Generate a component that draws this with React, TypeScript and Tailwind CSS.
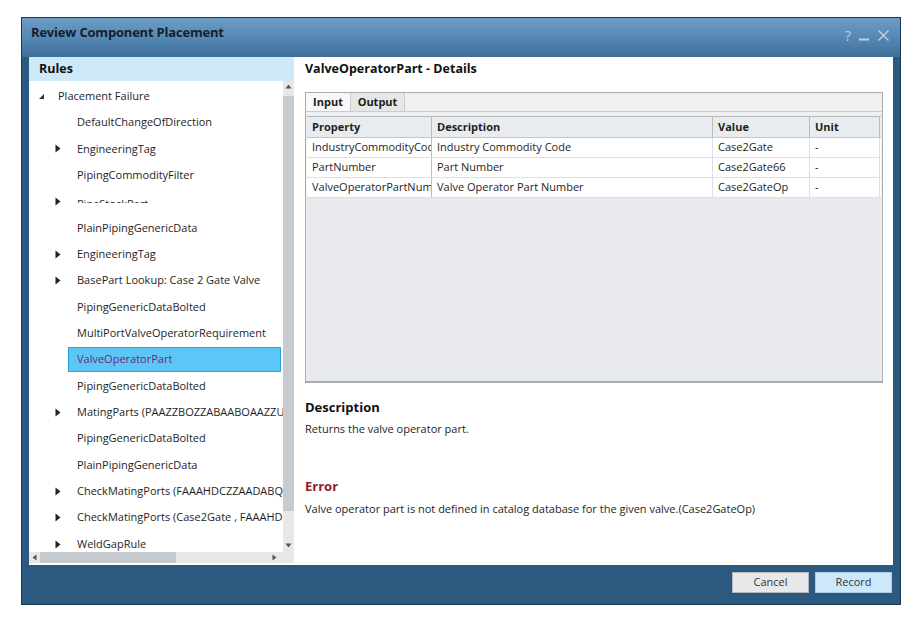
import React from "react";

type Node = { label: string; level: 0 | 1; arrow?: "open" | "closed"; selected?: boolean; clipped?: boolean };

const tree: Node[] = [
  { label: "Placement Failure", level: 0, arrow: "open" },
  { label: "DefaultChangeOfDirection", level: 1 },
  { label: "EngineeringTag", level: 1, arrow: "closed" },
  { label: "PipingCommodityFilter", level: 1 },
  { label: "PipeStockPart", level: 1, arrow: "closed", clipped: true },
  { label: "PlainPipingGenericData", level: 1 },
  { label: "EngineeringTag", level: 1, arrow: "closed" },
  { label: "BasePart Lookup: Case 2 Gate Valve", level: 1, arrow: "closed" },
  { label: "PipingGenericDataBolted", level: 1 },
  { label: "MultiPortValveOperatorRequirement", level: 1 },
  { label: "ValveOperatorPart", level: 1, selected: true },
  { label: "PipingGenericDataBolted", level: 1 },
  { label: "MatingParts (PAAZZBOZZABAABOAAZZUSAAAA)", level: 1, arrow: "closed" },
  { label: "PipingGenericDataBolted", level: 1 },
  { label: "PlainPipingGenericData", level: 1 },
  { label: "CheckMatingPorts (FAAAHDCZZAADABQZZAA)", level: 1, arrow: "closed" },
  { label: "CheckMatingPorts (Case2Gate , FAAAHDCZZAA)", level: 1, arrow: "closed" },
  { label: "WeldGapRule", level: 1, arrow: "closed" },
];

const rows = [
  ["IndustryCommodityCode", "Industry Commodity Code", "Case2Gate", "-"],
  ["PartNumber", "Part Number", "Case2Gate66", "-"],
  ["ValveOperatorPartNumber", "Valve Operator Part Number", "Case2GateOp", "-"],
];

const font = { fontFamily: '"Open Sans", "Noto Sans", sans-serif' };

function Arrow({ kind }: { kind: "open" | "closed" }) {
  if (kind === "open") {
    return (
      <svg width="7" height="7" viewBox="0 0 7 7">
        <path d="M6 1 L6 6 L1 6 Z" fill="#333" />
      </svg>
    );
  }
  return (
    <svg width="6" height="9" viewBox="0 0 6 9">
      <path d="M0.5 0.5 L5.5 4.5 L0.5 8.5 Z" fill="#222" />
    </svg>
  );
}

function TreeRow({ node }: { node: Node }) {
  const indent = node.level === 0 ? "pl-[9px]" : "pl-[26px]";
  const gutter = node.level === 0 ? "w-[20px]" : "w-[22px]";
  return (
    <div className={`flex h-[26.35px] items-center ${indent}`}>
      <div className={`flex shrink-0 items-center ${gutter}`}>{node.arrow && <Arrow kind={node.arrow} />}</div>
      {node.selected ? (
        <div className="-ml-[9px] flex h-[25px] w-[213px] shrink-0 items-center border border-[#2f9fd8] bg-[#5cc6f6] pl-[8px] text-[#6a2a78]">
          {node.label}
        </div>
      ) : node.clipped ? (
        <span className="-mt-[5px] block h-[7px] overflow-hidden whitespace-nowrap leading-[15px]">{node.label}</span>
      ) : (
        <span className="whitespace-nowrap">{node.label}</span>
      )}
    </div>
  );
}

export default function App() {
  return (
    <div className="h-[624px] w-[924px] overflow-hidden bg-white pl-[21px] pt-[17px] text-[11px] text-[#1e1e1e]" style={font}>
      <div className="flex h-[588px] w-[880px] flex-col border border-[#1d3a55] bg-[#2c5980]">
        {/* title bar */}
        <div className="flex h-[39px] shrink-0 items-start justify-between bg-gradient-to-b from-[#6b9dc6] via-[#5688b4] to-[#3d6f9a] pl-[9px] pr-[10px] pt-[5px]">
          <span className="text-[13px] font-bold tracking-[-0.2px] text-[#14202c]">Review Component Placement</span>
          <div className="flex items-center gap-[7px] pt-[2px] text-[#b9d2e6]">
            <span className="text-[14px]">?</span>
            <svg width="12" height="12" viewBox="0 0 12 12">
              <path d="M1 9.5 H11" stroke="#b9d2e6" strokeWidth="2" />
            </svg>
            <svg width="13" height="13" viewBox="0 0 13 13">
              <path d="M1.5 1.5 L11.5 11.5 M11.5 1.5 L1.5 11.5" stroke="#b9d2e6" strokeWidth="1.4" />
            </svg>
          </div>
        </div>

        {/* body */}
        <div className="mx-[7px] flex h-[508px] shrink-0 bg-white">
          {/* rules panel */}
          <div className="flex w-[265px] shrink-0 flex-col">
            <div className="flex h-[24px] shrink-0 items-center bg-[#cde8f8] pl-[10px] text-[12.5px] font-bold text-[#111]">Rules</div>
            <div className="flex min-h-0 flex-1 flex-col">
              <div className="flex min-h-0 flex-1">
                <div className="min-w-0 flex-1 overflow-hidden pt-[2px] text-[11px]">
                  {tree.map((n, i) => (
                    <TreeRow key={i} node={n} />
                  ))}
                </div>
                {/* vertical scrollbar */}
                <div className="flex w-[11px] shrink-0 flex-col items-center bg-[#e8e8e8] pt-[3px]">
                  <svg width="7" height="5" viewBox="0 0 7 5">
                    <path d="M3.5 0.5 L6.5 4.5 L0.5 4.5 Z" fill="#555" />
                  </svg>
                  <div className="mt-[7px] h-[415px] w-[11px] bg-[#c6cbd0]" />
                  <div className="flex-1" />
                  <svg className="mb-[4px]" width="7" height="5" viewBox="0 0 7 5">
                    <path d="M0.5 0.5 L6.5 0.5 L3.5 4.5 Z" fill="#555" />
                  </svg>
                </div>
              </div>
              {/* horizontal scrollbar */}
              <div className="flex h-[11px] shrink-0">
                <div className="flex flex-1 items-center bg-[#e8e8e8] pl-[3px] pr-[6px]">
                  <svg width="5" height="7" viewBox="0 0 5 7">
                    <path d="M0.5 3.5 L4.5 0.5 L4.5 6.5 Z" fill="#555" />
                  </svg>
                  <div className="ml-[3px] h-[11px] w-[136px] bg-[#c6cbd0]" />
                  <div className="flex-1" />
                  <svg width="5" height="7" viewBox="0 0 5 7">
                    <path d="M0.5 0.5 L4.5 3.5 L0.5 6.5 Z" fill="#555" />
                  </svg>
                </div>
                <div className="w-[11px] bg-[#e8e8e8]" />
              </div>
              <div className="h-[2px] shrink-0" />
            </div>
          </div>

          {/* details panel */}
          <div className="flex min-w-0 flex-1 flex-col pl-[11px] pr-[10px]">
            <div className="flex h-[24px] shrink-0 items-center text-[12.5px] font-bold text-[#111]">ValveOperatorPart - Details</div>
            <div className="mt-[11px] flex h-[291px] shrink-0 flex-col border border-b-2 border-[#a7acb2] bg-[#eef0f2]">
              <div className="flex h-[19px] shrink-0 border-b border-[#c9ccd0] bg-[#f0f0f0] text-[11px] font-bold text-[#1a1a1a]">
                <div className="flex w-[45px] items-center justify-center border-r border-[#c9ccd0] bg-[#f8f8f8]">Input</div>
                <div className="flex w-[54px] items-center justify-center border-r border-[#c9ccd0] bg-[#e6e6e6]">Output</div>
              </div>
              <div className="mx-[1px] mt-[4px] flex-1 border-t border-[#b5b9be] bg-[#e8eaed]">
                <div className="flex h-[21px] border-b border-[#c3c7cc] bg-[#e9ecef] font-bold">
                  <div className="flex w-[125px] items-center border-r border-[#b9bdc2] pl-[5px]">Property</div>
                  <div className="flex w-[281px] items-center border-r border-[#b9bdc2] pl-[5px]">Description</div>
                  <div className="flex w-[97px] items-center border-r border-[#b9bdc2] pl-[5px]">Value</div>
                  <div className="flex w-[70px] items-center border-r border-[#b9bdc2] pl-[5px]">Unit</div>
                </div>
                {rows.map((r, i) => (
                  <div key={i} className="flex h-[20px] border-b border-[#dcdfe3] bg-white">
                    <div className="flex w-[125px] items-center overflow-hidden whitespace-nowrap border-r border-[#b9bdc2] pl-[5px]">{r[0]}</div>
                    <div className="flex w-[281px] items-center border-r border-[#dcdfe3] pl-[5px]">{r[1]}</div>
                    <div className="flex w-[97px] items-center border-r border-[#dcdfe3] pl-[5px]">{r[2]}</div>
                    <div className="flex w-[70px] items-center border-r border-[#dcdfe3] pl-[5px]">{r[3]}</div>
                  </div>
                ))}
              </div>
            </div>

            <div className="mt-[15px] text-[13px] font-bold text-[#111]">Description</div>
            <div className="mt-[3px]">Returns the valve operator part.</div>
            <div className="mt-[40px] text-[13px] font-bold text-[#8a1c2e]">Error</div>
            <div className="mt-[4px]">Valve operator part is not defined in catalog database for the given valve.(Case2GateOp)</div>
          </div>
        </div>

        {/* footer */}
        <div className="flex flex-1 items-start justify-end gap-[6px] pr-[8px] pt-[7px]">
          <button className="h-[21px] w-[77px] border border-[#b4b8bc] bg-[#e7e8ea] text-[11px] text-[#333]">Cancel</button>
          <button className="h-[21px] w-[77px] border border-[#a9cde6] bg-[#cde8fa] text-[11px] text-[#333]">Record</button>
        </div>
      </div>
    </div>
  );
}
